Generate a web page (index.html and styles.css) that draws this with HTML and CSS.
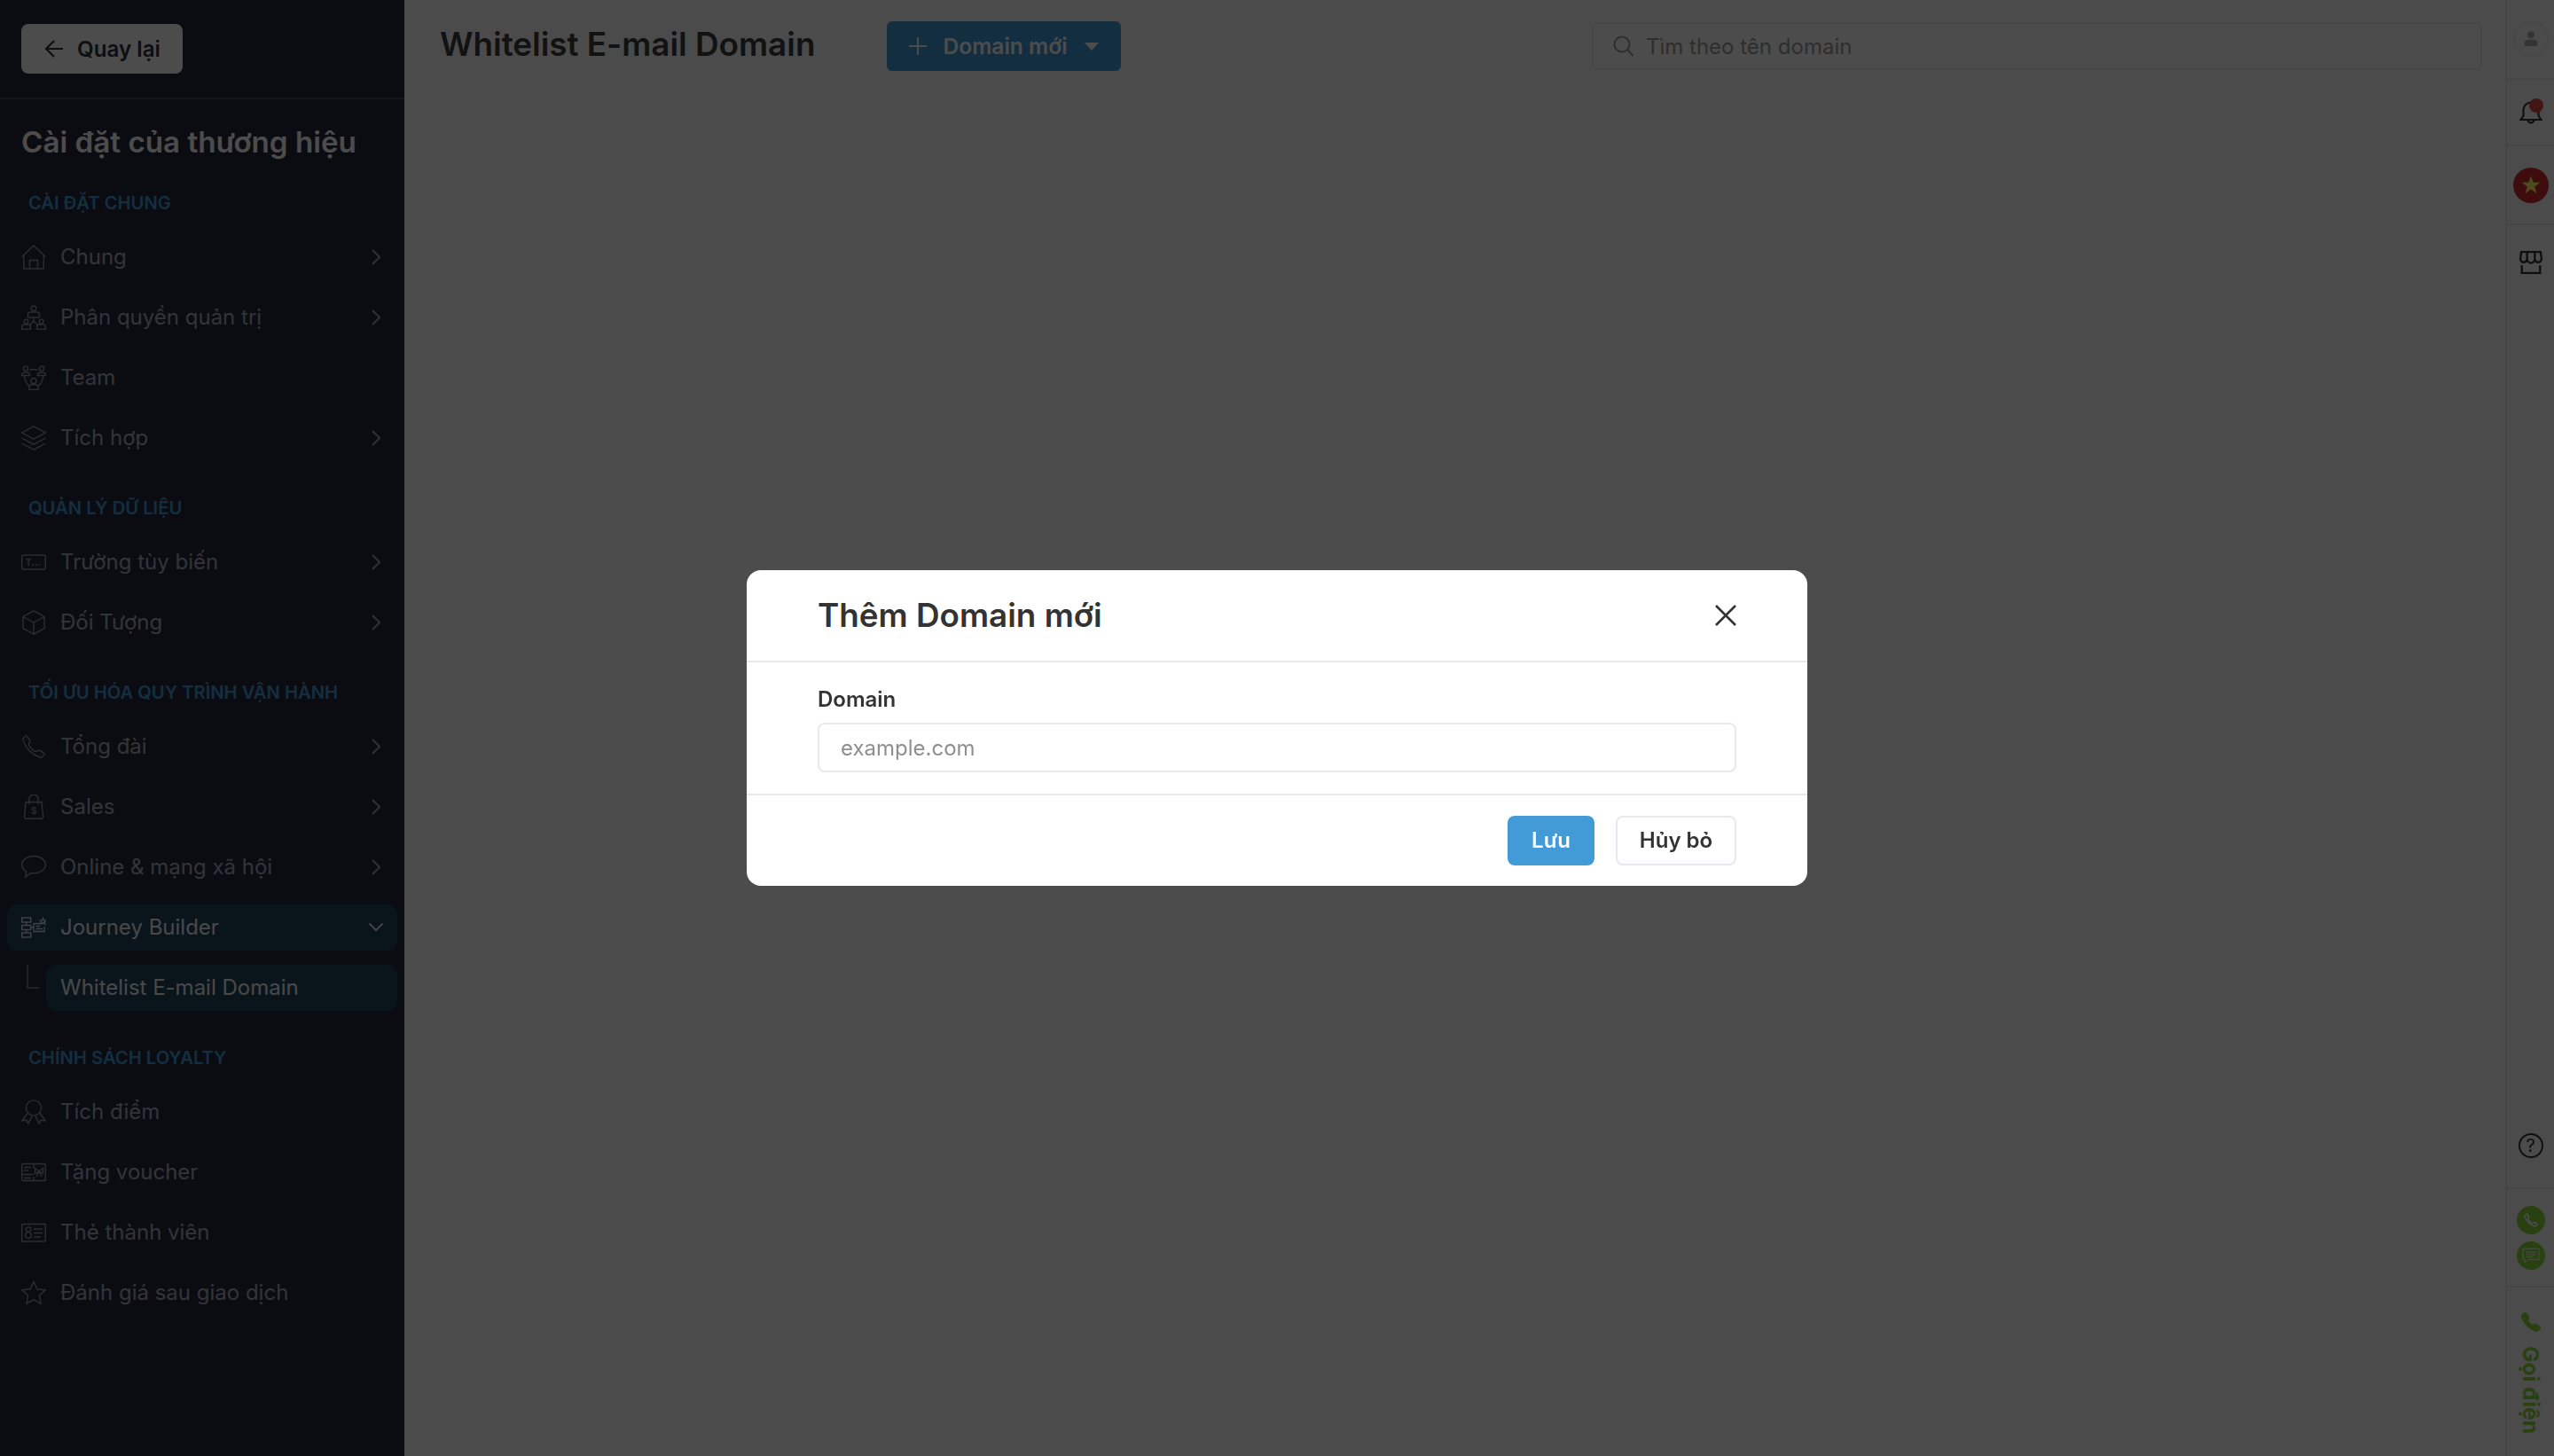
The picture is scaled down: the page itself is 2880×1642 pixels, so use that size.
FILE: index.html
```html
<!DOCTYPE html>
<html lang="vi">
<head>
<meta charset="utf-8">
<title>Whitelist E-mail Domain</title>
<link rel="stylesheet" href="styles.css">
</head>
<body>
<div class="app">
  <aside class="sidebar">
    <div class="side-head">
      <button class="back-btn">
        <svg class="back-icon" viewBox="0 0 22 22"><path d="M21 11H2M11 2l-9 9 9 9"/></svg>
        <span>Quay lại</span>
      </button>
    </div>
    <h2 class="side-title">Cài đặt của thương hiệu</h2>
    <nav class="nav">
      <div class="group">
        <div class="group-label">CÀI ĐẶT CHUNG</div>
        <a class="row"><svg class="ico" viewBox="0 0 28 28"><path d="M.7 13.5 14 .9l13.3 12.6M2.8 11.5V27h22.4V11.5M9.5 27V17.5h9V27"/></svg><span class="row-text">Chung</span><svg class="chev" viewBox="0 0 16 20"><path d="M4 2l8 8-8 8"/></svg></a>
        <a class="row"><svg class="ico" viewBox="0 0 28 28"><circle cx="14" cy="3.8" r="2.8"/><path d="M7.5 14v-3a3 3 0 0 1 3-3h7a3 3 0 0 1 3 3v3zM14 14v4M14 18l-4 4M14 18l4 4"/><circle cx="5.5" cy="18.5" r="2.4"/><path d="M.6 27.4v-3a2.4 2.4 0 0 1 2.4-2.4h5a2.4 2.4 0 0 1 2.4 2.4v3z"/><circle cx="22.5" cy="18.5" r="2.4"/><path d="M17.6 27.4v-3A2.4 2.4 0 0 1 20 22h5a2.4 2.4 0 0 1 2.4 2.4v3z"/></svg><span class="row-text">Phân quyền quản trị</span><svg class="chev" viewBox="0 0 16 20"><path d="M4 2l8 8-8 8"/></svg></a>
        <a class="row"><svg class="ico" viewBox="0 0 28 28"><circle cx="5" cy="3.5" r="2.6"/><path d="M.6 11.5V11a3 3 0 0 1 3-3h3a3 3 0 0 1 3 3v.5z"/><circle cx="23" cy="3.5" r="2.6"/><path d="M18.4 11.5V11a3 3 0 0 1 3-3h3a3 3 0 0 1 3 3v.5z"/><circle cx="14" cy="17.5" r="3"/><path d="M8.8 27.4v-2.6a3 3 0 0 1 3-3h4.4a3 3 0 0 1 3 3v2.6zM9.5 5.5q4.500-2 9 0M3.500 11.500q0 7 5 11.500M24.500 11.500q0 7-5 11.500"/></svg><span class="row-text">Team</span></a>
        <a class="row"><svg class="ico" viewBox="0 0 28 28"><path d="M14 .8 27.400 8 14 15.200.6 8zM.6 14 14 21.200 27.400 14M.6 20 14 27.200 27.400 20"/></svg><span class="row-text">Tích hợp</span><svg class="chev" viewBox="0 0 16 20"><path d="M4 2l8 8-8 8"/></svg></a>
      </div>
      <div class="group">
        <div class="group-label">QUẢN LÝ DỮ LIỆU</div>
        <a class="row"><svg class="ico" viewBox="0 0 28 28"><rect x=".7" y="6" width="26.600" height="16" rx="2"/><text class="ico-text" x="4.500" y="18">T...</text></svg><span class="row-text">Trường tùy biến</span><svg class="chev" viewBox="0 0 16 20"><path d="M4 2l8 8-8 8"/></svg></a>
        <a class="row"><svg class="ico" viewBox="0 0 28 28"><path d="M14 .8 26 7.500v13L14 27.200 2 20.500v-13zM2 7.500 14 14l12-6.500M14 14v13.200"/></svg><span class="row-text">Đối Tượng</span><svg class="chev" viewBox="0 0 16 20"><path d="M4 2l8 8-8 8"/></svg></a>
      </div>
      <div class="group">
        <div class="group-label">TỐI ƯU HÓA QUY TRÌNH VẬN HÀNH</div>
        <a class="row"><svg class="ico ico-thin" viewBox="0 0 16 16"><path d="M3.654 1.328a.678.678 0 0 0-1.015-.063L1.605 2.300c-.483.484-.661 1.169-.45 1.770a17.568 17.568 0 0 0 4.168 6.608 17.569 17.569 0 0 0 6.608 4.168c.601.211 1.286.033 1.770-.45l1.034-1.034a.678.678 0 0 0-.063-1.015l-2.307-1.794a.678.678 0 0 0-.58-.122l-2.190.547a1.745 1.745 0 0 1-1.657-.459L5.482 8.062a1.745 1.745 0 0 1-.46-1.657l.548-2.190a.678.678 0 0 0-.122-.58L3.654 1.328z"/></svg><span class="row-text">Tổng đài</span><svg class="chev" viewBox="0 0 16 20"><path d="M4 2l8 8-8 8"/></svg></a>
        <a class="row"><svg class="ico" viewBox="0 0 28 28"><path d="M9 11V5a5 5 0 0 1 10 0v6M5 8.500h18l1.500 16.500a2 2 0 0 1-2 2.300H5.500a2 2 0 0 1-2-2.300z"/><text class="ico-text ico-text-sm" x="11" y="22">$</text></svg><span class="row-text">Sales</span><svg class="chev" viewBox="0 0 16 20"><path d="M4 2l8 8-8 8"/></svg></a>
        <a class="row"><svg class="ico" viewBox="0 0 28 28"><path d="M14 1.500C6.500 1.500.7 5.800.7 11.200c0 3.200 2 5.800 5 7.400L4.500 25l6-4.500c1.100.2 2.300.3 3.500.3 7.500 0 13.300-4.200 13.300-9.600S21.500 1.500 14 1.500z"/></svg><span class="row-text">Online &amp; mạng xã hội</span><svg class="chev" viewBox="0 0 16 20"><path d="M4 2l8 8-8 8"/></svg></a>
        <a class="row row-active"><svg class="ico" viewBox="0 0 28 28"><rect x=".7" y="3" width="10" height="5"/><rect x=".7" y="11.500" width="10" height="5"/><rect x=".7" y="20" width="10" height="5"/><path d="M5.700 8v3.500M5.700 16.500V20M10.700 14H14M14 9.500h8M26 13v5.500H14v-9M16.500 12.500H21M16.500 15.500H24"/><path d="M24.500 3.500l1 2.400 2.400.2-1.800 1.600.6 2.400-2.200-1.300-2.200 1.300.6-2.400-1.800-1.600 2.400-.2z"/></svg><span class="row-text">Journey Builder</span><svg class="chev chev-down" viewBox="0 0 16 16"><path d="M.5 3.500 8 11l7.500-7.500"/></svg></a>
        <div class="sub">
          <span class="tree"></span>
          <a class="sub-item">Whitelist E-mail Domain</a>
        </div>
      </div>
      <div class="group">
        <div class="group-label">CHÍNH SÁCH LOYALTY</div>
        <a class="row"><svg class="ico" viewBox="0 0 28 28"><circle cx="14" cy="9.500" r="8.600"/><path d="M7 15.500.7 24l5.300-.8L8 27.300l4-8.500M21 15.500 27.300 24l-5.300-.8-2 4.100-4-8.500"/></svg><span class="row-text">Tích điểm</span></a>
        <a class="row"><svg class="ico" viewBox="0 0 28 28"><rect x=".7" y="4.500" width="26.600" height="19" rx="1.500"/><path d="M3 8.500h8M3 12h5M.7 16.500h13M3 20.500h8M14 4.500v5M14 19v4.500M20 13l-4.500-3.500v6zM20 13l4.500-3.500v6zM20 13l-3 6M20 13l3 6"/></svg><span class="row-text">Tặng voucher</span></a>
        <a class="row"><svg class="ico" viewBox="0 0 28 28"><rect x=".7" y="4.500" width="26.600" height="19.500" rx="1"/><circle cx="8" cy="10.500" r="2.600"/><circle cx="8" cy="17" r="3.400"/><path d="M14 10h10M14 14.500h10M14 19h8"/></svg><span class="row-text">Thẻ thành viên</span></a>
        <a class="row"><svg class="ico" viewBox="0 0 28 28"><path d="M14 1.500l3.900 8.300 9.100 1.100-6.700 6.200 1.800 9-8.100-4.500-8.100 4.500 1.800-9L1 10.900l9.100-1.100z"/></svg><span class="row-text">Đánh giá sau giao dịch</span></a>
      </div>
    </nav>
  </aside>

  <main class="main">
    <header class="topbar">
      <h1 class="page-title">Whitelist E-mail Domain</h1>
      <button class="add-btn">
        <svg class="plus" viewBox="0 0 20 20"><path d="M10 0v20M0 10h20"/></svg>
        <span>Domain mới</span>
        <span class="caret"></span>
      </button>
      <div class="search">
        <svg class="search-ico" viewBox="0 0 24 24"><circle cx="10" cy="10" r="8.500"/><path d="M16.500 16.500l6 6.500"/></svg>
        <span>Tìm theo tên domain</span>
      </div>
    </header>
    <div class="content"></div>
  </main>

  <aside class="rail">
    <div class="rail-cell cell-a"><div class="avatar"><svg viewBox="0 0 20 24"><circle cx="10" cy="6" r="5"/><path d="M1 21v-3a5 5 0 0 1 5-5h8a5 5 0 0 1 5 5v3a1 1 0 0 1-1 1H2a1 1 0 0 1-1-1z"/></svg></div></div>
    <div class="rail-cell cell-b"><span class="bell-wrap"><svg class="bell" viewBox="0 0 26 30"><path d="M1.500 23h23l-3-4.500V12a8.500 8.500 0 0 0-17 0v6.500zM9.500 23a3.500 3.500 0 0 0 7 0"/></svg><span class="bell-dot"></span></span></div>
    <div class="rail-cell cell-c"><div class="flag"><svg viewBox="0 0 24 24"><path d="M12 1.500l2.700 7.200h7.700l-6.200 4.700 2.300 7.500-6.500-4.400-6.500 4.400 2.300-7.500-6.200-4.700h7.700z"/></svg></div></div>
    <div class="rail-cell cell-d"><svg class="shop" viewBox="0 0 24 24"><path d="M2 1h20l1 7a3.500 3.500 0 0 1-7 .5 4 4 0 0 1-8 0A3.500 3.500 0 0 1 1 8zM8 1v7.500M16 1v7.500M2.500 15v8h19v-8"/></svg></div>
    <div class="rail-cell cell-e"><div class="help">?</div></div>
    <div class="rail-cell cell-f">
      <div class="dot-btn"><svg viewBox="0 0 16 16"><path d="M3.654 1.328a.678.678 0 0 0-1.015-.063L1.605 2.300c-.483.484-.661 1.169-.45 1.770a17.568 17.568 0 0 0 4.168 6.608 17.569 17.569 0 0 0 6.608 4.168c.601.211 1.286.033 1.770-.45l1.034-1.034a.678.678 0 0 0-.063-1.015l-2.307-1.794a.678.678 0 0 0-.58-.122l-2.190.547a1.745 1.745 0 0 1-1.657-.459L5.482 8.062a1.745 1.745 0 0 1-.46-1.657l.548-2.190a.678.678 0 0 0-.122-.58z"/></svg></div>
      <div class="dot-btn"><svg class="chat-ico" viewBox="0 0 18 18"><path d="M1 2h16v11H6l-3 3v-3H1zM4 5.500h10M4 8h10M4 10.500h7"/></svg></div>
    </div>
    <div class="rail-cell cell-g">
      <svg class="call-ico" viewBox="0 0 16 16"><path d="M1.885.511a1.745 1.745 0 0 1 2.610.163L6.290 2.980c.329.423.445.974.315 1.494l-.547 2.190a.678.678 0 0 0 .178.643l2.457 2.457a.678.678 0 0 0 .644.178l2.189-.547a1.745 1.745 0 0 1 1.494.315l2.306 1.794c.829.645.905 1.870.163 2.611l-1.034 1.034c-.74.74-1.846 1.065-2.877.702a18.634 18.634 0 0 1-7.010-4.420 18.634 18.634 0 0 1-4.420-7.009c-.362-1.030-.037-2.137.703-2.877L1.885.511z"/></svg>
      <span class="call-text">Gọi điện</span>
    </div>
  </aside>
</div>

<div class="overlay">
  <section class="modal">
    <div class="modal-head">
      <h3 class="modal-title">Thêm Domain mới</h3>
      <svg class="close" viewBox="0 0 24 24"><path d="M1 1l22 22M23 1 1 23"/></svg>
    </div>
    <div class="modal-body">
      <label class="field-label">Domain</label>
      <div class="field"><span>example.com</span></div>
    </div>
    <div class="modal-foot">
      <button class="btn-save">Lưu</button>
      <button class="btn-cancel">Hủy bỏ</button>
    </div>
  </section>
</div>
</body>
</html>
```

FILE: styles.css
```css
* { box-sizing: border-box; }
html, body { margin: 0; height: 100%; }
body { font-family: Inter, "Liberation Sans", sans-serif; color: #333; overflow: hidden; background: #fff; }
h1, h2, h3 { margin: 0; }
button { font-family: inherit; cursor: pointer; }

.app { display: flex; height: 100vh; }

/* sidebar */
.sidebar { width: 456px; flex: none; background: #252b3c; display: flex; flex-direction: column; }
.side-head { height: 112px; padding: 27px 24px; border-bottom: 2px solid #444a5a; }
.back-btn { width: 182px; height: 56px; display: flex; align-items: center; gap: 15px; padding: 0 0 0 26px; background: #fff; border: 0; border-radius: 8px; font-size: 24.2px; font-weight: 600; color: #333; }
.back-icon { width: 22px; height: 22px; fill: none; stroke: #333; stroke-width: 2.2; }
.side-title { margin: 24px 0 27px 24px; font-size: 33.2px; line-height: 48px; font-weight: 600; color: #fff; white-space: nowrap; }

.nav { padding: 0 8px; display: flex; flex-direction: column; }
.group { display: flex; flex-direction: column; gap: 16px; }
.group + .group { margin-top: 35px; }
.group-label { height: 35px; line-height: 35px; margin-bottom: 2px; padding-left: 24px; font-size: 20.2px; font-weight: 600; color: #429bd6; white-space: nowrap; }
.row { height: 52px; display: flex; align-items: center; padding: 0 16px; border-radius: 12px; color: #a9b0c0; font-size: 24px; }
.row-text { margin-left: 16px; padding-bottom: 1px; flex: 1; }
.ico { width: 28px; height: 28px; flex: none; fill: none; stroke: #8f96a6; stroke-width: 1.4; }
.ico-thin { stroke-width: .8; }
.ico-text { font-family: Inter, sans-serif; font-size: 11px; font-weight: 600; fill: #8f96a6; stroke: none; }
.ico-text-sm { font-size: 10px; }
.chev { width: 16px; height: 20px; flex: none; fill: none; stroke: #9aa1b1; stroke-width: 2; }
.chev-down { height: 16px; }
.row-active { background: #21465d; color: #f0f2f5; }
.row-active .ico { stroke: #d8dce2; }
.row-active .chev { stroke: #d8dce2; }
.sub { display: flex; }
.tree { width: 14px; height: 27px; margin: 0 8px 0 22px; flex: none; border-left: 2px solid #6c7282; border-bottom: 2px solid #6c7282; }
.sub-item { flex: 1; height: 52px; line-height: 52px; padding-left: 16px; border-radius: 12px; background: #21465d; color: #f0f2f5; font-size: 24px; }

/* main */
.main { flex: 1; display: flex; flex-direction: column; min-width: 0; background: #fbfbfb; }
.topbar { height: 104px; flex: none; display: flex; align-items: center; padding: 0 26px 0 40px; }
.page-title { font-size: 36.8px; line-height: 48px; padding-bottom: 4px; font-weight: 600; color: #3c3c3c; white-space: nowrap; }
.add-btn { margin-left: 81px; width: 264px; height: 56px; flex: none; display: flex; align-items: center; padding: 0 0 0 25px; background: #429bd6; border: 0; border-radius: 6px; color: #fff; font-size: 24.6px; font-weight: 600; }
.plus { width: 20px; height: 20px; fill: none; stroke: #fff; stroke-width: 2; margin-right: 18px; }
.caret { margin-left: 19px; width: 0; height: 0; border-left: 8px solid transparent; border-right: 8px solid transparent; border-top: 9px solid #fff; }
.search { margin-left: auto; width: 1004px; height: 54px; flex: none; display: flex; align-items: center; padding-left: 22px; background: #fff; border: 2px solid #ebebeb; border-radius: 8px; color: #9a9a9a; font-size: 24px; }
.search-ico { width: 24px; height: 24px; margin-right: 13px; fill: none; stroke: #999; stroke-width: 2; }
.content { flex: 1; margin-right: 25px; background: #fff; }

/* right rail */
.rail { width: 55px; flex: none; display: flex; flex-direction: column; align-items: stretch; border-left: 2px solid #ececec; background: #fbfbfb; }
.rail-cell { display: flex; align-items: center; justify-content: center; border-bottom: 2px solid #ececec; }
.cell-a { height: 90px; }
.cell-b { height: 75px; }
.cell-c { height: 89px; }
.cell-d { height: 83px; border-bottom: 0; }
.cell-e { height: 96px; margin-top: auto; }
.cell-f { height: 111px; flex-direction: column; gap: 8px; }
.cell-g { height: 190px; border-bottom: 0; flex-direction: column; justify-content: flex-start; padding-top: 28px; }
.avatar { width: 40px; height: 40px; border: 2px solid #eeeeee; border-radius: 50%; display: flex; align-items: center; justify-content: center; }
.avatar svg { width: 16px; height: 20px; fill: #b0b0b0; }
.bell-wrap { position: relative; display: block; width: 26px; height: 30px; }
.bell { display: block; width: 26px; height: 30px; fill: none; stroke: #333; stroke-width: 2.2; }
.bell-dot { position: absolute; top: -1px; right: -1px; width: 16px; height: 16px; border-radius: 50%; background: #e5484d; }
.flag { width: 40px; height: 40px; border-radius: 50%; background: #d02a2a; display: flex; align-items: center; justify-content: center; }
.flag svg { width: 24px; height: 24px; fill: #ffff66; }
.shop { width: 26px; height: 26px; fill: none; stroke: #333; stroke-width: 2.2; }
.help { width: 28px; height: 28px; border: 2px solid #333; border-radius: 50%; text-align: center; font-size: 20px; line-height: 24px; color: #333; }
.dot-btn { width: 32px; height: 32px; border-radius: 50%; background: #8bd63a; display: flex; align-items: center; justify-content: center; }
.dot-btn svg { width: 16px; height: 16px; fill: none; stroke: #fff; stroke-width: 1.6; }
.dot-btn .chat-ico { width: 20px; height: 20px; stroke-width: .9; }
.call-ico { width: 22px; height: 22px; fill: #8bd63a; flex: none; }
.call-text { margin-top: 16px; writing-mode: vertical-rl; font-size: 24.6px; font-weight: 700; color: #8bd63a; white-space: nowrap; }

/* modal */
.overlay { position: fixed; inset: 0; background: rgba(0,0,0,.7); display: flex; align-items: center; justify-content: center; }
.modal { width: 1196px; height: 356px; background: #fff; border-radius: 16px; display: flex; flex-direction: column; }
.modal-head { height: 104px; flex: none; display: flex; align-items: center; justify-content: space-between; padding: 0 80px; border-bottom: 2px solid #e8e8ee; }
.modal-title { font-size: 36.8px; padding-bottom: 2px; font-weight: 600; color: #333; }
.close { width: 24px; height: 24px; fill: none; stroke: #333; stroke-width: 2.6; }
.modal-body { height: 148px; flex: none; padding: 26px 80px 24px; display: flex; flex-direction: column; gap: 10px; }
.field-label { height: 32px; line-height: 32px; font-size: 24px; font-weight: 600; color: #333; }
.field { height: 56px; display: flex; align-items: center; padding-left: 24px; border: 2px solid #e8e8ee; border-radius: 8px; font-size: 24px; color: #8f8f8f; }
.modal-foot { height: 104px; flex: none; display: flex; align-items: center; justify-content: flex-end; gap: 24px; padding: 0 80px; border-top: 2px solid #e8e8ee; }
.btn-save { width: 98px; height: 56px; padding: 0 0 2px; border: 0; border-radius: 8px; background: #429bd6; color: #fff; font-size: 24px; font-weight: 600; }
.btn-cancel { width: 136px; height: 56px; padding: 0 0 2px; border: 2px solid #e8e8ee; border-radius: 8px; background: #fff; color: #333; font-size: 24px; font-weight: 600; }
```
